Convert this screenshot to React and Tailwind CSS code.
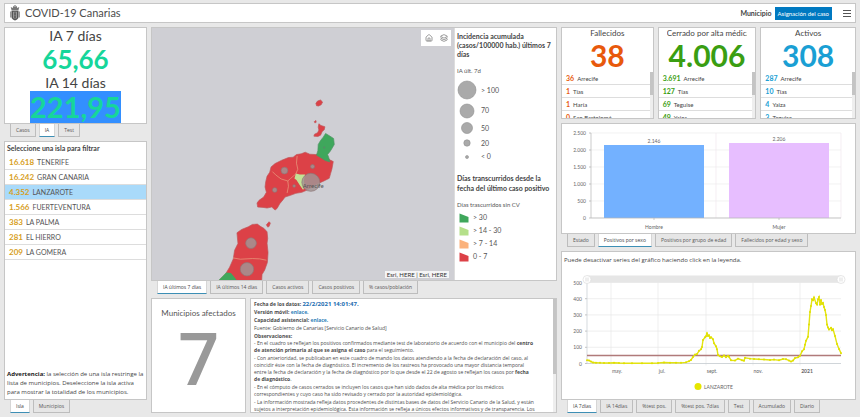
import { useState } from "react";
import { Home, Layers } from "lucide-react";

const islands = [
  { name: "TENERIFE", cases: "16.618" },
  { name: "GRAN CANARIA", cases: "16.242" },
  { name: "LANZAROTE", cases: "4.352" },
  { name: "FUERTEVENTURA", cases: "1.566" },
  { name: "LA PALMA", cases: "383" },
  { name: "EL HIERRO", cases: "281" },
  { name: "LA GOMERA", cases: "209" },
];

const summaries = [
  {
    title: "Fallecidos",
    total: "38",
    color: "text-[#e8590c]",
    rows: [
      ["36", "Arrecife"],
      ["1", "Tías"],
      ["1", "Haría"],
      ["0", "San Bartolomé"],
    ],
  },
  {
    title: "Cerrado por alta médica",
    total: "4.006",
    color: "text-[#3a9e12]",
    rows: [
      ["3.691", "Arrecife"],
      ["127", "Tías"],
      ["69", "Teguise"],
      ["49", "Yaiza"],
    ],
  },
  {
    title: "Activos",
    total: "308",
    color: "text-[#1a9fd4]",
    rows: [
      ["287", "Arrecife"],
      ["10", "Tías"],
      ["4", "Yaiza"],
      ["3", "Teguise"],
    ],
  },
];

const sizeLegend = [
  { label: "> 100", r: 9, h: "h-[22px]" },
  { label: "70", r: 7, h: "h-[19px]" },
  { label: "50", r: 5.5, h: "h-[16px]" },
  { label: "20", r: 3.2, h: "h-[14px]" },
  { label: "< 0", r: 1.5, h: "h-[13px]" },
];

const colorLegend = [
  { label: "> 30", fill: "#3fa75c" },
  { label: "> 14 - 30", fill: "#b5e08a" },
  { label: "> 7 - 14", fill: "#fbb27c" },
  { label: "0 - 7", fill: "#dc4147" },
];

// [x, accumulated incidence]
const series = [
  [25, 20], [27, 19], [29, 12], [31, 6], [34, 5], [38, 4], [42, 3], [47, 3], [52, 5], [57, 3],
  [62, 2], [70, 2], [80, 2], [90, 2], [96, 3], [102, 6], [108, 5], [114, 5], [119, 4], [124, 7],
  [127, 14], [129, 22], [131, 40], [133, 55], [135, 58], [137, 78], [139, 88], [140, 102], [141, 145],
  [143, 162], [144, 168], [145, 186], [146, 170], [147, 174], [148, 158], [149, 162], [151, 150],
  [152, 125], [154, 106], [155, 88], [156, 52], [158, 44], [160, 40], [162, 50], [164, 38], [166, 48],
  [167, 42], [169, 20], [173, 18], [176, 30], [180, 20], [182, 17], [183, 35], [188, 30], [192, 28],
  [197, 26], [202, 25], [208, 22], [212, 24], [217, 20], [221, 28], [224, 27], [227, 18], [229, 12],
  [231, 18], [233, 34], [236, 38], [238, 48], [240, 75], [242, 88], [243, 115], [244, 140], [246, 165],
  [247, 240], [248, 318], [249, 355], [250, 396], [251, 390], [252, 408], [254, 372], [255, 364],
  [256, 396], [257, 410], [258, 362], [259, 392], [260, 368], [261, 374], [262, 348], [263, 330],
  [264, 300], [265, 240], [266, 222], [267, 210], [269, 220], [270, 206], [271, 212], [273, 170],
  [275, 120], [277, 90], [279, 64],
];

function Panel({ className = "", children }) {
  return (
    <div className={`border border-[#c6c6c6] bg-white ${className}`}>{children}</div>
  );
}

function Tabs({ items, initial }) {
  const [active, setActive] = useState(initial);

  return (
    <div
      role="tablist"
      className="flex h-[13px] shrink-0 gap-[3px] pl-1.5 font-['Open_Sans',sans-serif]"
    >
      {items.map((item) => (
        <button
          key={item}
          role="tab"
          aria-selected={item === active}
          onClick={() => setActive(item)}
          className={`whitespace-nowrap border border-t-0 px-[5px] text-[5px] leading-[11px] ${
            item === active
              ? "border-[#d6d6d6] border-b-[#3d8fb5] bg-white text-[#444]"
              : "border-[#bdbdbd] bg-[#e6e6e6] text-[#555]"
          }`}
        >
          {item}
        </button>
      ))}
    </div>
  );
}

function CoatOfArms() {
  return (
    <svg viewBox="0 0 20 32" className="h-4 w-2.5" aria-hidden="true">
      <path d="M3 10 1.500 4l4 2L7 1.500 10 4l3-2.500L14.500 6l4-2L17 10z" fill="#777" />
      <path d="M10 0v4M8.500 1.500h3" stroke="#555" />
      <path d="M3 11h14v13c0 4-4 6-7 7-3-1-7-3-7-7z" fill="#555" />
      <path d="M1.500 13v12M18.500 13v12" stroke="#777" strokeWidth="2" />
      <path d="M7 13.500v13M13 13.500v13M10 13v4M10 19v4M10 25v3" stroke="#bbb" strokeWidth="1.300" />
    </svg>
  );
}

function Header() {
  return (
    <header className="flex h-5 shrink-0 items-center border border-[#c6c6c6] bg-white pl-[5px] pr-1">
      <CoatOfArms />
      <h1 className="ml-[5px] text-[11px] leading-4 text-[#4c4c4c]">COVID-19 Canarias</h1>
      <span className="ml-auto text-[7px] font-bold text-[#444]">Municipio</span>
      <button className="ml-[3px] h-[13px] bg-[#0079c1] px-[3px] text-[6px] text-white">
        Asignación del caso
      </button>
      <button aria-label="Menú" className="ml-[11px] flex w-2 flex-col gap-0.5">
        <span className="h-px w-full bg-[#555]" />
        <span className="h-px w-full bg-[#555]" />
        <span className="h-px w-full bg-[#555]" />
      </button>
    </header>
  );
}

function Incidence() {
  return (
    <Panel className="flex h-[97px] shrink-0 flex-col items-center overflow-hidden text-[#444]">
      <p className="text-[14px] leading-4">IA 7 días</p>
      <p className="text-[26px] font-bold leading-[30px] text-[#16d69a]">65,66</p>
      <p className="text-[14px] leading-[17px]">IA 14 días</p>
      <p className="bg-[#338fff] text-[29px] font-bold leading-8 text-[#16d69a]">221,95</p>
    </Panel>
  );
}

function IslandList() {
  const [selected, setSelected] = useState("LANZAROTE");

  return (
    <Panel className="flex min-h-0 flex-1 flex-col text-[#555]">
      <h2 className="px-0.5 text-[7px] font-bold leading-[13px] text-[#444]">
        Seleccione una isla para filtrar
      </h2>
      <ul>
        {islands.map((island) => (
          <li key={island.name}>
            <button
              onClick={() => setSelected(island.name)}
              className={`flex h-[15px] w-full items-center gap-[3px] border-b border-[#ddd] pl-1 text-[7px] ${
                island.name === selected ? "bg-[#a9dafa]" : ""
              }`}
            >
              <span className="text-[8px] font-bold text-[#d79e22]">{island.cases}</span>
              {island.name}
            </button>
          </li>
        ))}
      </ul>
      <p className="mt-auto whitespace-nowrap px-0.5 pb-0.5 font-['Open_Sans',sans-serif] text-[6px] leading-[9px] text-[#444]">
        <strong className="text-[#222]">Advertencia:</strong> la selección de una isla restringe la
        <br />
        lista de municipios. Deseleccione la isla activa
        <br />
        para mostrar la totalidad de los municipios.
      </p>
    </Panel>
  );
}

function IslandMap() {
  return (
    <div className="relative min-w-0 flex-1 bg-[#cfcfd4]">
      <svg
        viewBox="6 9 903 756"
        preserveAspectRatio="xMidYMid slice"
        className="absolute inset-0 h-full w-full"
        role="img"
        aria-label="Mapa de incidencia"
      >
        <g fill="#dc4147" stroke="#bf5559" strokeWidth="2" strokeLinejoin="round">
          <path d="M496 235l5-7 9-3 6 6-4 8-8 4-6-1z" />
          <path d="M491 290l5-4 1 5-3 3z" />
          <path d="M505 296l6 5 12 4-2 9-6 5-5 11-8 4-12-1 2-6 9-4 4-8-2-9z" />
          <path d="M348 598l8-9 4 4-4 10-4 2z" />
          <path d="M362 425l12-10 20-10 20-8 14-1 10-8 14-2 12-5 14 6 18 1 12-3 14 10 14 8 12 6-4 22-4 14-4 14-16 8-22 10-30 18-14 6-18 3-16 6-16 5-6 8-10 12-8 14-6 5-10-9-14 3-12-2-16-1-2-12 6-8 14-10 8-14-4-16 2-16 4-16 8-12z" />
          <path d="M260 622l14-10 20-8 12-7 15-1 8 6 12 7 9 10 2 20-2 14 3 28-2 30-8 22-8 14-1 18H206l20-20 12-20 11-25 4-26 10-20z" />
        </g>
        <path
          d="M525 325l10 6 14 9 2 18-7 12-5 8-8 10 4 10 3 12-14-4-12-8-14-8 4-14 1-18 7-12 8-10z"
          fill="#3fa75c"
          stroke="#4f9364"
          strokeWidth="2"
        />
        <path d="M436 445l12 3 16 0-4 16 2 18-4 12-10-14-10-16-6-4z" fill="#c3e396" />
        <path d="M204 765l16-16 8-8 14 1 10 12 8 11z" fill="#3fa75c" />
        <g fill="none" stroke="#e8a383" strokeWidth="2">
          <path d="M440 392l-2 22 4 18-6 14-16 14-8 7-20-6-16-12-10-10" />
          <path d="M412 467l2 16-4 20" />
          <path d="M248 697l22 4 36-2 22 1 20 4" />
        </g>
        <g fill="#a29494" stroke="#8f7777" strokeWidth="2" fillOpacity=".85">
          <circle cx="402" cy="436" r="10" />
          <circle cx="486" cy="424" r="6" />
          <circle cx="373" cy="494" r="7" />
          <circle cx="431" cy="482" r="4" />
          <circle cx="481" cy="471" r="27" />
          <circle cx="302" cy="653" r="16" />
          <circle cx="290" cy="731" r="20" />
        </g>
        <circle cx="521" cy="367" r="3" fill="#5a8a67" />
        <text x="457" y="487" fontSize="18" fill="#555">
          Arrecife
        </text>
      </svg>
      <div className="absolute right-[3px] top-0.5 flex h-4 w-[30px] items-center justify-around bg-white text-[#666]">
        <button aria-label="Inicio">
          <Home size={8} />
        </button>
        <button aria-label="Capas">
          <Layers size={8} />
        </button>
      </div>
      <p className="absolute bottom-0.5 right-[5px] bg-white/80 px-0.5 text-[6px] leading-[7px] text-[#333]">
        Esri, HERE | Esri, HERE
      </p>
    </div>
  );
}

function Legend() {
  return (
    <div className="w-[102px] shrink-0 overflow-hidden border-l border-[#ddd] pl-0.5 pt-1 text-[7px] text-[#555]">
      <h2 className="text-[7px] font-bold leading-[9px] text-[#444]">
        Incidencia acumulada
        <br />
        (casos/100000 hab.) últimos 7
        <br />
        días
      </h2>
      <p className="mb-1 mt-2 text-[6px] leading-2">IA últ. 7d</p>
      {sizeLegend.map((item) => (
        <div key={item.label} className={`flex items-center gap-1 ${item.h}`}>
          <svg viewBox="-10 -10 20 20" className="h-5 w-5 shrink-0">
            <circle r={item.r} fill="#aaa" stroke="#8e8e8e" strokeWidth=".6" />
          </svg>
          {item.label}
        </div>
      ))}
      <h2 className="mt-2.5 text-[7px] font-bold leading-[10px] text-[#444]">
        Días transcurridos desde la
        <br />
        fecha del último caso positivo
      </h2>
      <p className="mb-0.5 mt-2 text-[6px] leading-2">Días trascurridos sin CV</p>
      {colorLegend.map((item) => (
        <div key={item.label} className="flex h-[13px] items-center gap-1 pl-0.5">
          <svg viewBox="0 0 10 10" className="size-2.5 shrink-0">
            <path d="M.500.500 9.500 4v5.500h-9z" fill={item.fill} />
          </svg>
          {item.label}
        </div>
      ))}
    </div>
  );
}

function Notes() {
  return (
    <Panel className="flex min-w-0 flex-1 overflow-hidden font-['Open_Sans',sans-serif] text-[5px] text-[#4c4c4c]">
      <div className="min-w-0 flex-1 overflow-hidden whitespace-nowrap pl-[3px] pt-px">
        <div className="leading-2">
          <p>
            <strong>Fecha de los datos:</strong>{" "}
            <strong className="text-[6px] text-[#1b6cb0]">22/2/2021 14:01:47.</strong>
          </p>
          <p>
            <strong>Versión móvil:</strong>{" "}
            <a href="#movil" className="font-bold text-[#2f7fb8]">enlace.</a>
          </p>
          <p>
            <strong>Capacidad asistencial:</strong>{" "}
            <a href="#asistencial" className="font-bold text-[#2f7fb8]">enlace.</a>
          </p>
          <p>Fuente: Gobierno de Canarias [Servicio Canario de Salud]</p>
          <p>
            <strong>Observaciones:</strong>
          </p>
        </div>
        <div className="flex flex-col gap-px leading-[7px]">
          <p>
            - En el cuadro se reflejan los positivos confirmados mediante test de laboratorio de acuerdo
            con el municipio del <strong>centro</strong>
            <br />
            <strong>de atención primaria al que se asigna el caso</strong> para el seguimiento.
          </p>
          <p>
            - Con anterioridad, se publicaban en este cuadro de mando los datos atendiendo a la fecha de
            declaración del caso, al
            <br />
            coincidir éste con la fecha de diagnóstico. El incremento de los rastreos ha provocado una
            mayor distancia temporal
            <br />
            entre la fecha de declaración y la fecha de diagnóstico por lo que desde el 22 de agosto se
            reflejan los casos por <strong>fecha</strong>
            <br />
            <strong>de diagnóstico</strong>.
          </p>
          <p>
            - En el cómputo de casos cerrados se incluyen los casos que han sido dados de alta médica por
            los médicos
            <br />
            correspondientes y cuyo caso ha sido revisado y cerrado por la autoridad epidemiológica.
          </p>
          <p>
            - La información mostrada refleja datos procedentes de distintas bases de datos del Servicio
            Canario de la Salud, y están
            <br />
            sujetos a interpretación epidemiológica. Esta información se refleja a únicos efectos
            informativos y de transparencia. Los
          </p>
        </div>
      </div>
      <div className="w-[3px] shrink-0 bg-[#eee]">
        <div className="h-2/3 bg-[#c4c4c4]" />
      </div>
    </Panel>
  );
}

function SummaryCard({ title, total, color, rows }) {
  return (
    <Panel className="flex min-w-0 flex-col overflow-hidden text-[#444]">
      <h2 className="mx-2 shrink-0 overflow-hidden whitespace-nowrap text-center text-[8px] leading-[10px]">
        {title}
      </h2>
      <p className={`shrink-0 text-center text-[30px] font-bold leading-[34px] ${color}`}>{total}</p>
      <div className="flex min-h-0 flex-1">
        <ul className="min-w-0 flex-1">
          {rows.map(([count, place]) => (
            <li
              key={place}
              className="flex h-[13px] items-center gap-[3px] border-b border-[#ddd] pl-1 text-[6px]"
            >
              <span className={`text-[7px] font-bold ${color}`}>{count}</span>
              {place}
            </li>
          ))}
        </ul>
        <div className="w-[3px] shrink-0 bg-[#eee]">
          <div className="h-1/2 bg-[#c4c4c4]" />
        </div>
      </div>
    </Panel>
  );
}

function SexChart() {
  return (
    <svg
      viewBox="0 0 293 109"
      className="h-full w-full"
      fontSize="5"
      fill="#666"
      role="img"
      aria-label="Positivos por sexo"
    >
      {[0, 500, 1000, 1500, 2000, 2500].map((value) => {
        const y = 94 - (value / 500) * 17;
        return (
          <g key={value}>
            <path d={`M29 ${y}H279`} stroke="#ececec" strokeWidth=".7" />
            <path d={`M27 ${y}H29`} stroke="#aaa" strokeWidth=".7" />
            <text x="24" y={y + 2} textAnchor="end">
              {value.toLocaleString("es-ES", { useGrouping: "always" })}
            </text>
          </g>
        );
      })}
      <path d="M154 9V94M279 9V94" stroke="#f0e6ee" strokeWidth=".7" />
      <rect x="42" y="21" width="100" height="73" fill="#73b1ff" />
      <rect x="167" y="19" width="100" height="75" fill="#e7beff" />
      <path d="M29 9V94H279M92 94v2M217 94v2" fill="none" stroke="#b5b5b5" strokeWidth=".7" />
      <g textAnchor="middle">
        <text x="92" y="19">2.146</text>
        <text x="217" y="17">2.206</text>
        <text x="92" y="105">Hombre</text>
        <text x="217" y="105">Mujer</text>
      </g>
    </svg>
  );
}

function IncidenceChart() {
  const points = series.map(([x, value]) => [x, 96 - (value * 81) / 500]);

  return (
    <svg
      viewBox="0 -3 293 134"
      className="min-h-0 w-full flex-1"
      fontSize="5"
      fill="#666"
      role="img"
      aria-label="IA 7 días"
    >
      {[0, 100, 200, 300, 400, 500].map((value) => {
        const y = 96 - (value * 81) / 500;
        return (
          <g key={value}>
            <path d={`M25 ${y}H279`} stroke="#e8e8e8" strokeWidth=".7" />
            <path d={`M23 ${y}H25`} stroke="#aaa" strokeWidth=".7" />
            <text x="20" y={y + 2} textAnchor="end">
              {value}
            </text>
          </g>
        );
      })}
      <path d="M49 15V98M96 15V98M144 15V98M191 15V98M238 15V98" stroke="#e8e8e8" strokeWidth=".7" />
      <path d="M25 15V96H279" fill="none" stroke="#c3cad0" strokeWidth=".7" />
      <rect x="25" y="8" width="254" height="7" fill="#e6e6e6" />
      {[25, 279].map((x) => (
        <g key={x}>
          <circle cx={x} cy="12" r="4" fill="#fff" stroke="#ddd" strokeWidth=".7" />
          <path d={`M${x - 1} 10v4M${x + 1} 10v4`} stroke="#bbb" strokeWidth=".5" />
        </g>
      ))}
      <path d="M25 88H279" stroke="#b07a7a" strokeWidth="1.300" />
      <polyline points={points.join(" ")} fill="none" stroke="#e3e312" strokeWidth="1.400" />
      {points.map(([x, y]) => (
        <circle key={x} cx={x} cy={y} r="1" fill="#e0e000" />
      ))}
      <g textAnchor="middle">
        <text x="55" y="105">may.</text>
        <text x="100" y="105">jul.</text>
        <text x="150" y="105">sept.</text>
        <text x="196" y="105">nov.</text>
        <text x="245" y="105" fontWeight="bold">2021</text>
      </g>
      <circle cx="136" cy="119" r="3.500" fill="#e6e600" />
      <text x="142" y="121">LANZAROTE</text>
    </svg>
  );
}

export default function App() {
  return (
    <div className="flex h-screen flex-col gap-1 bg-[#e8e8e8] px-1 pb-1 pt-[3px] font-['Lato',sans-serif]">
      <Header />
      <main className="grid min-h-0 flex-1 grid-cols-[143fr_406fr_295fr] gap-1">
        <section className="flex min-h-0 min-w-0 flex-col gap-1">
          <div>
            <Incidence />
            <Tabs items={["Casos", "IA", "Test"]} initial="IA" />
          </div>
          <div className="flex min-h-0 flex-1 flex-col">
            <IslandList />
            <Tabs items={["Isla", "Municipios"]} initial="Isla" />
          </div>
        </section>

        <section className="flex min-h-0 min-w-0 flex-col gap-1">
          <div className="flex min-h-0 flex-[7] flex-col">
            <Panel className="flex min-h-0 flex-1 overflow-hidden">
              <IslandMap />
              <Legend />
            </Panel>
            <Tabs
              items={[
                "IA últimos 7 días",
                "IA últimos 14 días",
                "Casos activos",
                "Casos positivos",
                "% casos/población",
              ]}
              initial="IA últimos 7 días"
            />
          </div>
          <div className="flex min-h-0 flex-[3] gap-1">
            <Panel className="flex w-[95px] shrink-0 flex-col items-center pt-2 text-[#555]">
              <h2 className="text-[8px] leading-3">Municipios afectados</h2>
              <p className="font-['Open_Sans',sans-serif] text-[72px] font-semibold leading-[76px] text-[#999]">
                7
              </p>
            </Panel>
            <Notes />
          </div>
        </section>

        <section className="flex min-h-0 min-w-0 flex-col gap-1">
          <div className="grid h-[92px] shrink-0 grid-cols-[92fr_98fr_95fr] gap-1">
            {summaries.map((summary) => (
              <SummaryCard key={summary.title} {...summary} />
            ))}
          </div>
          <div className="flex min-h-0 flex-[124] flex-col">
            <Panel className="min-h-0 flex-1">
              <SexChart />
            </Panel>
            <Tabs
              items={[
                "Estado",
                "Positivos por sexo",
                "Positivos por grupo de edad",
                "Fallecidos por edad y sexo",
              ]}
              initial="Positivos por sexo"
            />
          </div>
          <div className="flex min-h-0 flex-[162] flex-col">
            <Panel className="flex min-h-0 flex-1 flex-col">
              <p className="px-0.5 pt-1 font-['Open_Sans',sans-serif] text-[6px] leading-2 text-[#444]">
                Puede desactivar series del gráfico haciendo click en la leyenda.
              </p>
              <IncidenceChart />
            </Panel>
            <Tabs
              items={[
                "IA 7días",
                "IA 14días",
                "%test pos.",
                "%test pos. 7días",
                "Test",
                "Acumulado",
                "Diario",
              ]}
              initial="IA 7días"
            />
          </div>
        </section>
      </main>
    </div>
  );
}
